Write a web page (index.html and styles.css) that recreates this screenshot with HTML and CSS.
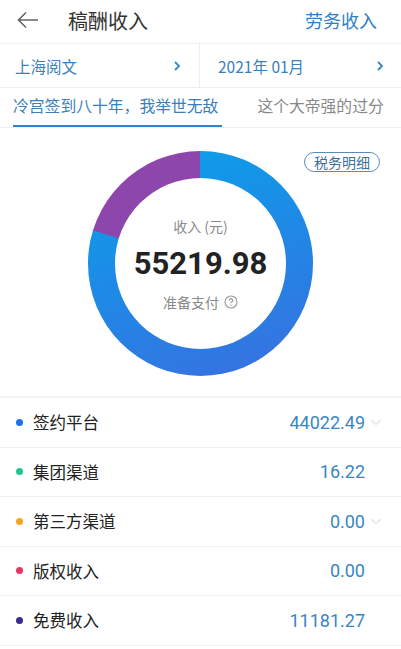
FILE: index.html
```html
<!DOCTYPE html>
<html lang="zh-CN">

<head>
    <meta charset="UTF-8">
    <meta name="viewport" content="width=device-width, initial-scale=1.0">
    <title>稿酬收入</title>
    <link rel="stylesheet" href="styles.css">
</head>

<body>
    <div class="page">
        <header class="topbar">
            <svg class="back" width="22" height="18" viewBox="0 0 22 18">
                <path d="M21 9H2M9 1.5L1.5 9L9 16.5" fill="none" stroke="#666" stroke-width="1.6" />
            </svg>
            <h1 class="title">稿酬收入</h1>
            <a class="switch">劳务收入</a>
        </header>

        <div class="filters">
            <div class="filter">
                <span>上海阅文</span>
                <svg class="arrow" width="8" height="12" viewBox="0 0 8 12">
                    <path d="M2 2l4 4l-4 4" fill="none" stroke="#3a86c4" stroke-width="1.8" />
                </svg>
            </div>
            <div class="filter">
                <span>2021年 01月</span>
                <svg class="arrow" width="8" height="12" viewBox="0 0 8 12">
                    <path d="M2 2l4 4l-4 4" fill="none" stroke="#3a86c4" stroke-width="1.8" />
                </svg>
            </div>
        </div>

        <div class="tabs">
            <div class="tab active">冷宫签到八十年，我举世无敌</div>
            <div class="tab">这个大帝强的过分</div>
        </div>

        <section class="chart">
            <a class="tax">税务明细</a>
            <div class="donut">
                <div class="donut-inner">
                    <div class="label">收入 (元)</div>
                    <div class="total">55219.98</div>
                    <div class="status">准备支付
                        <svg width="14" height="14" viewBox="0 0 14 14">
                            <circle cx="7" cy="7" r="6" fill="none" stroke="#999" stroke-width="1.1" />
                            <path d="M5.2 5.4a1.8 1.8 0 1 1 2.6 1.6c-.6.3-.8.6-.8 1.3" fill="none" stroke="#999" stroke-width="1.1" />
                            <circle cx="7" cy="10.2" r=".7" fill="#999" />
                        </svg>
                    </div>
                </div>
            </div>
        </section>

        <ul class="list">
            <li class="row">
                <i class="dot blue"></i><span class="name">签约平台</span>
                <span class="amount">44022.49</span>
                <svg class="more" width="14" height="10" viewBox="0 0 14 10"><path d="M2 3l5 4.5l5-4.5" fill="none" stroke="#e3e3e3" stroke-width="1.3" /></svg>
            </li>
            <li class="row">
                <i class="dot green"></i><span class="name">集团渠道</span>
                <span class="amount">16.22</span>
                <span class="more"></span>
            </li>
            <li class="row">
                <i class="dot orange"></i><span class="name">第三方渠道</span>
                <span class="amount">0.00</span>
                <svg class="more" width="14" height="10" viewBox="0 0 14 10"><path d="M2 3l5 4.5l5-4.5" fill="none" stroke="#e3e3e3" stroke-width="1.3" /></svg>
            </li>
            <li class="row">
                <i class="dot pink"></i><span class="name">版权收入</span>
                <span class="amount">0.00</span>
                <span class="more"></span>
            </li>
            <li class="row">
                <i class="dot purple"></i><span class="name">免费收入</span>
                <span class="amount">11181.27</span>
                <span class="more"></span>
            </li>
        </ul>
    </div>
</body>

</html>
```

FILE: styles.css
```css
body {
    margin: 0;
    background-color: #ffffff;
    font-family: "Noto Sans CJK SC", "Noto Sans", sans-serif;
    color: #222222;
}

.page {
    width: 401px;
    overflow: hidden;
}

/* top bar */
.topbar {
    height: 40px;
    display: flex;
    align-items: center;
    padding: 0 24px 0 17px;
    margin-top: -8px;
    padding-top: 8px;
}

.back {
    margin-right: 29px;
}

.title {
    flex: 1;
    margin: 0;
    font-size: 20px;
    font-weight: 400;
    color: #333333;
}

.switch {
    font-size: 18px;
    color: #2f80c6;
}

/* filters */
.filters {
    display: flex;
    height: 43px;
    margin-top: 3px;
    border-top: 1px solid #f1f1f1;
    border-bottom: 1px solid #eeeeee;
}

.filter {
    flex: 1;
    display: flex;
    align-items: center;
    justify-content: space-between;
    font-size: 15.5px;
    color: #3a80bd;
    padding: 0 18px 0 15px;
}

.filter + .filter {
    border-left: 1px solid #eeeeee;
    padding-left: 18px;
    padding-right: 17px;
}

/* tabs */
.tabs {
    display: flex;
    gap: 35px;
    height: 39px;
    padding-left: 13px;
    border-bottom: 1px solid #eeeeee;
    white-space: nowrap;
}

.tab {
    font-size: 15.8px;
    color: #888888;
    line-height: 36px;
}

.tab.active {
    color: #3a80bd;
    border-bottom: 2px solid #2f84cf;
    padding-right: 4px;
}

/* chart */
.chart {
    position: relative;
    display: flex;
    justify-content: center;
    padding: 23px 0 20px;
    border-bottom: 2px solid #f3f3f3;
}

.tax {
    position: absolute;
    top: 24px;
    right: 21px;
    width: 74px;
    height: 18px;
    border: 1.5px solid #5a8db5;
    border-radius: 10px;
    font-size: 14px;
    line-height: 18px;
    text-align: center;
    color: #3d6f99;
}

.donut {
    width: 225px;
    height: 225px;
    border-radius: 50%;
    display: flex;
    align-items: center;
    justify-content: center;
    background:
        conic-gradient(transparent 0 79.75%, #8d46ab 79.75% 100%),
        linear-gradient(160deg, #08a3ea 0%, #1d8be6 45%, #3a6ee0 100%);
}

.donut-inner {
    width: 171px;
    height: 171px;
    border-radius: 50%;
    background-color: #ffffff;
    display: flex;
    flex-direction: column;
    align-items: center;
    justify-content: center;
    gap: 8px;
}

.label {
    font-size: 14px;
    line-height: 20px;
    color: #8a8a8a;
}

.total {
    font-family: Roboto, "Noto Sans", sans-serif;
    font-size: 31px;
    font-weight: 700;
    line-height: 40px;
    color: #222222;
}

.status {
    display: flex;
    align-items: center;
    gap: 5px;
    font-size: 14px;
    line-height: 20px;
    color: #8a8a8a;
}

/* list */
.list {
    list-style: none;
    margin: 0;
    padding: 0;
}

.row {
    display: flex;
    align-items: center;
    height: 48.5px;
    border-bottom: 1px solid #eeeeee;
    padding: 0 18px 0 16px;
}

.dot {
    width: 7px;
    height: 7px;
    border-radius: 50%;
    margin-right: 10px;
}

.blue { background-color: #1a72e6; }
.green { background-color: #1fc688; }
.orange { background-color: #f6a51c; }
.pink { background-color: #e93464; }
.purple { background-color: #3a2b8c; }

.name {
    flex: 1;
    font-size: 16.5px;
}

.amount {
    font-family: Roboto, "Noto Sans", sans-serif;
    font-size: 18px;
    color: #3a86c4;
}

.more {
    width: 14px;
    margin-left: 4px;
}
```
